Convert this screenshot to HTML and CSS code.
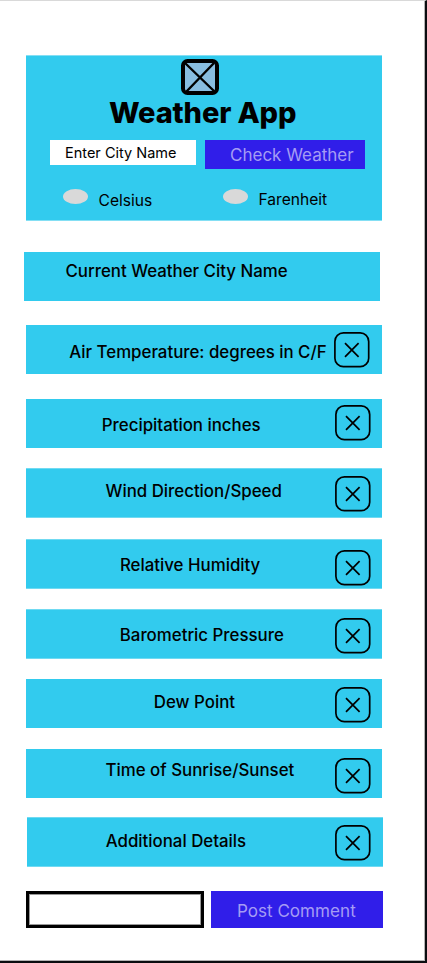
FILE: index.html
```
<!DOCTYPE html>
<html lang="en">
<head>
<meta charset="utf-8">
<title>Weather App</title>
<link rel="stylesheet" href="styles.css">
</head>
<body>
<svg class="defs" width="0" height="0" aria-hidden="true">
  <symbol id="close" viewBox="0 0 36 36">
    <rect x="0.9" y="0.9" width="33.8" height="33.8" rx="8.5"/>
    <path d="M11 11.2 24.6 24.8M24.6 11.2 11 24.8"/>
  </symbol>
</svg>
<main class="page">
  <header class="hero">
    <svg class="logo" viewBox="0 0 38 36" aria-hidden="true">
      <rect class="logo-box" x="2" y="2" width="34" height="32" rx="4.5"/>
      <path class="logo-cross" d="M4 4 34 33M33 4 5 33"/>
    </svg>
    <h1 class="title"><span>Weather App</span></h1>
    <div class="search">
      <div class="city"><span>Enter City Name</span></div>
      <div class="button check"><span>Check Weather</span></div>
    </div>
    <div class="units">
      <div class="unit celsius"><i class="dot"></i><span>Celsius</span></div>
      <div class="unit farenheit"><i class="dot"></i><span>Farenheit</span></div>
    </div>
  </header>
  <section class="row current"><span>Current Weather City Name</span></section>
  <section class="row air"><span>Air Temperature: degrees in C/F</span><svg class="close"><use href="#close"/></svg></section>
  <section class="row precipitation"><span>Precipitation inches</span><svg class="close"><use href="#close"/></svg></section>
  <section class="row soft wind"><span>Wind Direction/Speed</span><svg class="close"><use href="#close"/></svg></section>
  <section class="row soft humidity"><span>Relative Humidity</span><svg class="close"><use href="#close"/></svg></section>
  <section class="row soft pressure"><span>Barometric Pressure</span><svg class="close"><use href="#close"/></svg></section>
  <section class="row dew"><span>Dew Point</span><svg class="close"><use href="#close"/></svg></section>
  <section class="row sun"><span>Time of Sunrise/Sunset</span><svg class="close"><use href="#close"/></svg></section>
  <section class="row soft details"><span>Additional Details</span><svg class="close"><use href="#close"/></svg></section>
  <footer class="comment">
    <div class="comment-input"></div>
    <div class="button post"><span>Post Comment</span></div>
  </footer>
</main>
</body>
</html>
```
FILE: styles.css
```
* { box-sizing: border-box; }
body { margin: 0; background: #fff; color: #000; font-family: Inter, sans-serif; }
.defs { display: block; }
.page {
  display: flow-root;
  width: 427px;
  height: 963px;
  background: #fff;
  border-top: 1px solid #d9d9d9;
  border-right: 2px solid #0b0d10;
  border-bottom: 2px solid #0b0d10;
  box-shadow: inset -1px -1px #b4b4b4;
}
span { white-space: nowrap; }
.hero {
  display: flow-root;
  width: 356px;
  height: 166px;
  margin: 54px 0 0 26px;
  background: #32cbee;
  box-shadow: inset 0 1px #84dff4, inset 0 -1px #84dff4;
}
.logo { display: block; width: 38px; height: 36px; margin: 4px 0 0 155px; }
.logo-box { fill: #88bde0; stroke: #000; stroke-width: 4; }
.logo-cross { fill: none; stroke: #000; stroke-width: 2.4; }
.title {
  margin: 0 0 0 83px;
  font-size: 29px;
  line-height: 36px;
  font-weight: 800;
  letter-spacing: -0.15px;
}
.search { display: flex; align-items: flex-start; margin: 9px 0 0 24px; }
.city {
  width: 146px;
  height: 25px;
  padding-left: 15px;
  background: #fff;
  font-size: 14.5px;
  line-height: 26px;
}
.button { background: #301ee9; color: #a59cf4; }
.check {
  width: 160px;
  height: 29px;
  margin-left: 9px;
  padding-left: 25px;
  font-size: 17px;
  line-height: 30px;
}
.units { display: flex; margin: 20px 0 0 37px; font-size: 15.6px; line-height: 20px; }
.unit { display: flex; align-items: flex-start; width: 160px; }
.dot { width: 25px; height: 15px; margin-right: 10px; border-radius: 50%; background: #d9d9d9; }
.unit span { margin: 1px 0 0 0.6px; }
.celsius span { margin-top: 2px; }
.farenheit span { margin-left: 1px; }
.row {
  display: flex;
  align-items: flex-start;
  width: 356px;
  height: 49px;
  margin-left: 26px;
  background: #32cbee;
  font-size: 16.85px;
  line-height: 20px;
  font-weight: 450;
}
.soft { height: 50px; box-shadow: inset 0 1px #70daf2, inset 0 -1px #70daf2; }
.close {
  width: 36px;
  height: 36px;
  margin: 7px 11px 0 auto;
  fill: none;
  stroke: #000;
  stroke-width: 1.7;
}
.current { margin: 31px 0 0 24px; padding-left: 41.5px; }
.current span { margin-top: 9px; }
.air { margin-top: 24px; padding-left: 43.3px; }
.air span { margin-top: 17px; }
.air .close { margin-right: 12px; }
.precipitation { margin-top: 25px; padding-left: 75.8px; }
.precipitation span { margin-top: 16px; }
.precipitation .close { margin-top: 6px; }
.wind { margin-top: 20px; padding-left: 79.5px; }
.wind span { margin-top: 13px; }
.wind .close { margin-top: 8px; }
.humidity { margin-top: 21px; padding-left: 93.9px; }
.humidity span { margin-top: 16px; }
.humidity .close { margin-top: 11px; }
.pressure { margin-top: 20px; padding-left: 93.8px; }
.pressure span { margin-top: 16px; }
.pressure .close { margin-top: 9px; }
.dew { margin-top: 20px; padding-left: 127.8px; }
.dew span { margin-top: 13px; }
.dew .close { margin-top: 8px; }
.sun { margin-top: 21px; padding-left: 79.5px; }
.sun span { margin-top: 11px; }
.sun .close { margin-top: 9px; }
.details { margin: 19px 0 0 27px; padding-left: 78.7px; }
.details span { margin-top: 14px; }
.details .close { margin: 8px 12px 0 auto; }
.comment { display: flex; align-items: flex-start; margin: 24px 0 0 26px; }
.comment-input { width: 178px; height: 37px; border: 3px solid #000; background: #fff; box-shadow: inset 0 0 0 1px #999; }
.post {
  width: 172px;
  height: 37px;
  margin-left: 7.4px;
  padding-left: 25.5px;
  font-size: 17.1px;
  line-height: 39px;
}
```
